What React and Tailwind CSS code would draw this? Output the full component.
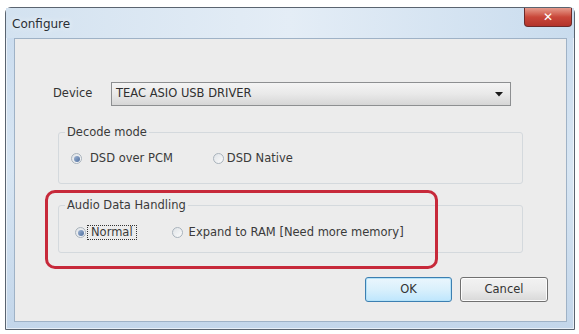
import React from "react";

function Radio({ checked }) {
  return (
    <span className="relative inline-flex h-[11px] w-[11px] shrink-0 items-center justify-center rounded-full border border-[#a9b3bc] bg-gradient-to-br from-[#dfe3e7] to-[#fbfbfb]">
      {checked && (
        <span className="h-[6px] w-[6px] rounded-full bg-gradient-to-br from-[#9fb4d2] to-[#4f6f9f]" />
      )}
    </span>
  );
}

export default function App() {
  return (
    <div
      className="h-[334px] w-[579px] overflow-hidden bg-white pl-[5px] pt-[7px] text-[11.5px] text-[#3a3a3a]"
      style={{ fontFamily: '"DejaVu Sans", Verdana, sans-serif' }}
    >
      <div className="flex h-[323px] w-[570px] flex-col rounded-t-[6px] border border-[#5a6470] bg-gradient-to-b from-[#c9dbee] via-[#d8e6f3] to-[#c3d6ea] shadow-[inset_0_0_0_1px_rgba(255,255,255,0.6)]">
        {/* Title bar */}
        <div className="flex h-[30px] items-start justify-between bg-gradient-to-r from-[#d3e2f0] via-[#e4edf6] to-[#c9dcee]">
          <span className="mt-[7px] pl-[6px] text-[12px] text-[#2b2f35] [text-shadow:0_0_6px_#ffffff]">
            Configure
          </span>
          <div className="mr-[2px] flex h-[19px] w-[48px] items-center justify-center rounded-b-[4px] border border-[#6b2a2a] border-t-0 bg-gradient-to-b from-[#e59a8c] via-[#c9473a] to-[#b3332b] text-[12px] font-bold leading-none text-white">
            ✕
          </div>
        </div>
        {/* Client area */}
        <div className="relative mb-[7px] ml-[8px] mr-[7px] flex flex-1 flex-col border border-[#9fb2c6] bg-[#ececec]">
          {/* Device row */}
          <div className="mt-[43px] flex items-center">
            <span className="w-[96px] pl-[38px] text-[#333]">Device</span>
            <div className="flex h-[24px] w-[400px] items-center justify-between border border-[#8d8f91] bg-gradient-to-b from-[#f4f4f4] via-[#e9e9e9] to-[#d6d6d6] pl-[4px] pr-[7px]">
              <span className="text-[#2f2f2f]">TEAC ASIO USB DRIVER</span>
              <svg width="8" height="5" viewBox="0 0 8 5">
                <path d="M0 0 L8 0 L4 4.5 Z" fill="#1a1a1a" />
              </svg>
            </div>
          </div>

          {/* Decode mode group */}
          <div className="ml-[43px] mt-[26px] flex h-[52px] w-[465px] flex-col rounded-[3px] border border-[#d4d9dd]">
            <span className="-mt-[8px] ml-[6px] self-start bg-[#ececec] px-[2px] leading-[14px] text-[#3a3a3a]">
              Decode mode
            </span>
            <div className="mt-[11px] flex items-center">
              <div className="ml-[12px] flex items-center gap-[8px]">
                <Radio checked />
                <span>DSD over PCM</span>
              </div>
              <div className="ml-[40px] flex items-center gap-[3px]">
                <Radio />
                <span>DSD Native</span>
              </div>
            </div>
          </div>

          {/* Audio Data Handling group */}
          <div className="ml-[43px] mt-[21px] flex h-[48px] w-[465px] flex-col rounded-[3px] border border-[#d4d9dd]">
            <span className="-mt-[8px] ml-[6px] self-start bg-[#ececec] px-[2px] leading-[14px] text-[#3a3a3a]">
              Audio Data Handling
            </span>
            <div className="mt-[12px] flex items-center">
              <div className="ml-[16px] flex items-center gap-[1px]">
                <Radio checked />
                <span className="border border-dotted border-[#333] px-[3px] leading-[13px]">Normal</span>
              </div>
              <div className="ml-[35px] flex items-center gap-[6px]">
                <Radio />
                <span>Expand to RAM [Need more memory]</span>
              </div>
            </div>
          </div>

          {/* Buttons */}
          <div className="mt-auto mb-[19px] flex justify-end gap-[8px] pr-[18px]">
            <div className="flex h-[25px] w-[87px] items-center justify-center rounded-[3px] border border-[#3c7fb1] bg-gradient-to-b from-[#eaf6fd] via-[#d9f0fc] to-[#bee6fd] shadow-[inset_0_0_0_1px_#b4e2f8] text-[#333]">
              OK
            </div>
            <div className="flex h-[25px] w-[88px] items-center justify-center rounded-[3px] border border-[#707070] bg-gradient-to-b from-[#f2f2f2] via-[#ebebeb] to-[#d8d8d8] shadow-[inset_0_0_0_1px_#fcfcfc] text-[#333]">
              Cancel
            </div>
          </div>

          {/* Red annotation */}
          <div className="pointer-events-none absolute left-[30px] top-[151px] h-[79px] w-[393px] rounded-[10px] border-[3px] border-[#c7293a]" />
        </div>
      </div>
    </div>
  );
}
